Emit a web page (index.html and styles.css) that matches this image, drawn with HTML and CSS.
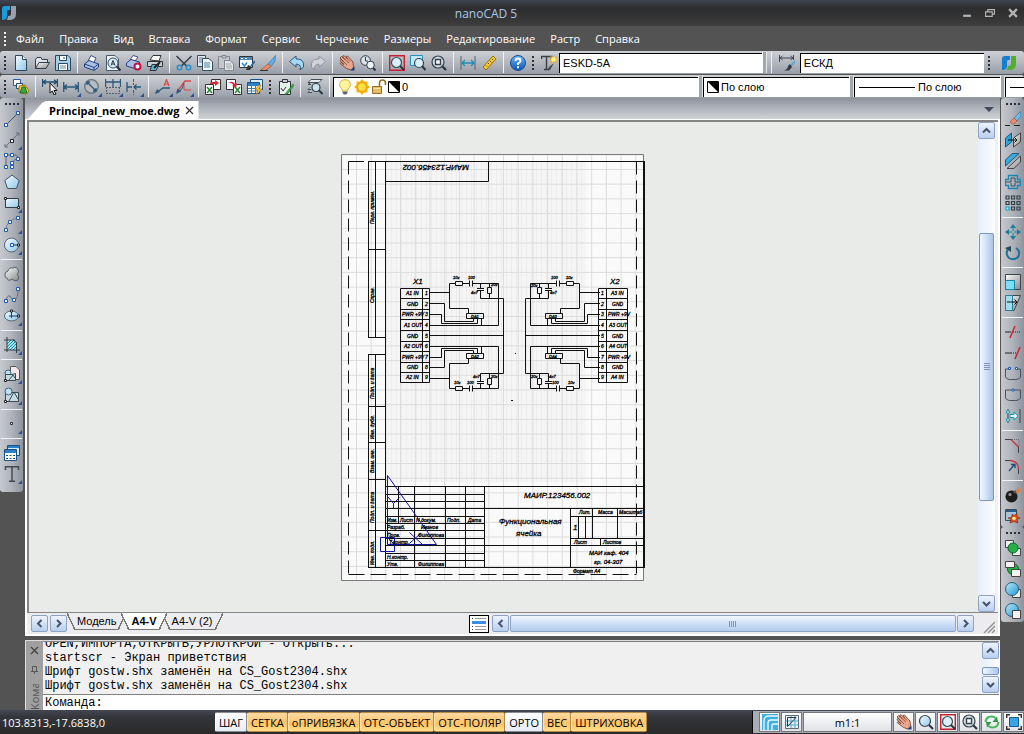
FILE: index.html
```html
<!DOCTYPE html>
<html lang="ru">
<head>
  <meta charset="UTF-8" />
  <meta name="viewport" content="width=device-width, initial-scale=1.0"/>
  <title>nanoCAD 5</title>
  <link rel="stylesheet" href="styles.css">
</head>
<body>

  <!-- icon sprite -->
  <svg class="sprite" aria-hidden="true">
    <defs>
      <linearGradient id="gBlue" x1="0" y1="0" x2="1" y2="1"><stop offset="0" stop-color="#f4fbff"/><stop offset="1" stop-color="#8cc8ea"/></linearGradient>
      <linearGradient id="gDeep" x1="0" y1="0" x2="0" y2="1"><stop offset="0" stop-color="#6db8f5"/><stop offset="1" stop-color="#0a55b0"/></linearGradient>
      <linearGradient id="gGrey" x1="0" y1="0" x2="1" y2="1"><stop offset="0" stop-color="#ffffff"/><stop offset="1" stop-color="#85888c"/></linearGradient>
      <linearGradient id="gSky" x1="0" y1="0" x2="1" y2="1"><stop offset="0" stop-color="#bfe9fb"/><stop offset="1" stop-color="#1e9ad0"/></linearGradient>
    </defs>
    <symbol id="logo" viewBox="0 0 16 16"><path d="M1 4Q1 1 4 1H9V5H7Q6 5 6 7V11Q6 15 1 15Z" fill="#1a9be0"/><path d="M10 1H15V9Q15 15 8 15H5Q7 14 7 11H8Q10 11 10 9Z" fill="#9aa0a8"/></symbol>
    <symbol id="logo2" viewBox="0 0 16 16"><path d="M1 4Q1 1 4 1H9V5H7Q6 5 6 7V11Q6 15 1 15Z" fill="#1580d0"/><path d="M10 1H15V9Q15 15 8 15H5Q7 14 7 11H8Q10 11 10 9Z" fill="#4fae2c"/></symbol>
    <symbol id="new" viewBox="0 0 16 16"><path d="M2.500 .5H9.500L13.500 4.500V15.500H2.500Z" fill="url(#gBlue)" stroke="#2c4658"/><path d="M9.500 .5V4.500H13.500" fill="#fff" stroke="#2c4658"/></symbol>
    <symbol id="open" viewBox="0 0 16 16"><path d="M1.500 13.500V4.500L3 2.500H7L8 4.500H13.500V7" fill="#e0e4e8" stroke="#333c44"/><path d="M1.500 13.500L5 7.500H15.500L12 13.500Z" fill="url(#gGrey)" stroke="#333c44"/></symbol>
    <symbol id="save" viewBox="0 0 16 16"><path d="M.5 .5H13L15.500 3V15.500H.5Z" fill="#a8cfe6" stroke="#26475e"/><path d="M4.500 .5H11.500V5.500H4.500Z" fill="#fff" stroke="#26475e"/><path d="M9 2V4" stroke="#26475e"/><path d="M3.500 8.500H12.500V15.500H3.500Z" fill="#fff" stroke="#26475e"/><path d="M5 11H11M5 13H11" stroke="#6b8698"/></symbol>
    <symbol id="printbase" viewBox="0 0 16 16"><path d="M4 6L7 .5 12 3 9.500 8Z" fill="#fff" stroke="#35508c"/><path d="M.5 9L5 5.500 14.500 9V12L10 15.500 .5 12Z" fill="#a9c0e4" stroke="#26407c"/><path d="M.5 9L10 12.500 14.500 9M10 12.500V15" fill="none" stroke="#26407c"/></symbol>
    <symbol id="printset" viewBox="0 0 16 16"><path d="M4 5L7 .5 12 2 9 6Z" fill="#fff" stroke="#35508c"/><path d="M.5 8L5 4.500 13.500 7V10L9 13.500 .5 11Z" fill="#a9c0e4" stroke="#26407c"/><circle cx="11.500" cy="11.500" r="3" fill="#fff" stroke="#c81048" stroke-width="2"/></symbol>
    <symbol id="preview" viewBox="0 0 16 16"><path d="M1.500 .5H10L13.500 4V15.500H1.500Z" fill="#e8f2f8" stroke="#46586a"/><circle cx="8" cy="8" r="5" fill="#d6edf8" stroke="#3c4c5a"/><path d="M6 10.500L8 5.500 10 10.500M7 9H9" fill="none" stroke="#243440"/><path d="M11.500 11.500L15.500 15.500" stroke="#28343e" stroke-width="2"/></symbol>
    <symbol id="printer" viewBox="0 0 16 16"><path d="M3 5L6 .5H14L12 6Z" fill="#fff" stroke="#333"/><path d="M.5 6.500H15.500V11.500H.5Z" fill="#c3ced6" stroke="#333"/><path d="M3 15.500L5 9.500H12L9 15.500Z" fill="#58b8dc" stroke="#333"/><path d="M7 13L13 7" stroke="#222" stroke-width="2"/></symbol>
    <symbol id="cut" viewBox="0 0 16 16"><path d="M.5 1L11 11.500M15.500 1L5 11.500" stroke="#333e46" stroke-width="1.500"/><circle cx="3.500" cy="12.500" r="2.300" fill="none" stroke="#2a8fc8" stroke-width="1.500"/><circle cx="12.500" cy="12.500" r="2.300" fill="none" stroke="#2a8fc8" stroke-width="1.500"/></symbol>
    <symbol id="copy" viewBox="0 0 16 16"><path d="M.5 .5H8.500V11.500H.5Z" fill="#dceaf3" stroke="#334a5c"/><path d="M2 3H6M2 5H6M2 7H6" stroke="#6b8090"/><path d="M5.500 3.500H12L15.500 7V15.500H5.500Z" fill="#f3fafe" stroke="#334a5c"/><path d="M7 8H13M7 10H13M7 12H13" stroke="#4b7a9c"/></symbol>
    <symbol id="paste" viewBox="0 0 16 16"><g stroke="#80868c" fill="#c4c8cc"><path d="M.5 1.500H11.500V13.500H.5Z"/><path d="M4 .5H8V3H4Z"/><path d="M6.500 5.500H12L15.500 9V15.500H6.500Z" fill="#e4e6e8"/></g><path d="M8 9H13M8 11H14M8 13H14" stroke="#a2a6aa"/></symbol>
    <symbol id="match" viewBox="0 0 16 16"><path d="M.5 1.500H13.500V12.500H.5Z" fill="#f7fafc" stroke="#333"/><path d="M1 2H13V5H1Z" fill="#4b87ae"/><path d="M2 3.500H4M6 3.500H8" stroke="#fff"/><path d="M3 8L5.500 11 8 7.500" fill="none" stroke="#2a8fc8" stroke-width="1.500"/><path d="M16 6L12 11" stroke="#2a6c9c" stroke-width="2"/><path d="M7 15L9 10 13 12 11 15Z" fill="#333"/></symbol>
    <symbol id="brush" viewBox="0 0 16 16"><path d="M15.500 .5L8 9 11 11.500 15 6Z" fill="#5fb2e4" stroke="#2b6c9c" stroke-width=".6"/><path d="M8 9L11 11.500 5 15.500 1 15Z" fill="#f09068" stroke="#94492a" stroke-width=".6"/><path d="M0 15.500H8" stroke="#333"/></symbol>
    <symbol id="undo" viewBox="0 0 16 16"><path d="M.5 6.500L7 1V4H9Q15.500 4.500 14.500 12L11 15Q13 9.500 7 9V12Z" fill="#a5d8f4" stroke="#275a80"/></symbol>
    <symbol id="redo" viewBox="0 0 16 16"><path d="M15.500 6.500L9 1V4H7Q.5 4.500 1.500 12L5 15Q3 9.500 9 9V12Z" fill="#d0d3d7" stroke="#8f959b"/></symbol>
    <symbol id="hand" viewBox="0 0 16 16"><path d="M1 3L2.500 1.500 6 4.500 3.500 1.500 5 .5 8.500 4 7 1.500 8.500 1 14 7 14.500 12 12 15 7.500 13.500 1 8.500 2 7.500 5 9.500 .8 5.500 2 4.500 5 7Z" fill="#e8a78c" stroke="#70392a" stroke-width=".8"/><path d="M6 4.500L10 8M5 7L8 10M8.500 4L11 6.500" stroke="#70392a" stroke-width=".7"/><path d="M11.500 15.500L15.500 11.500V15.500Z" fill="#1a3c8c"/></symbol>
    <symbol id="zoomdyn" viewBox="0 0 16 16"><circle cx="5.500" cy="5.500" r="4.800" fill="#d9e3ea" stroke="#333e46"/><path d="M5.500 2V6H8" fill="none" stroke="#333e46"/><circle cx="10.500" cy="10" r="3.800" fill="#eef5fa" stroke="#333e46"/><path d="M13 13L15.500 15.500" stroke="#28343e" stroke-width="2"/></symbol>
    <symbol id="zoomall" viewBox="0 0 16 16"><path d="M.7 .7H15.300V15.300H.7Z" fill="none" stroke="#c81e32" stroke-width="1.400"/><circle cx="7.500" cy="7.500" r="5" fill="#d9f0fa" stroke="#30505c" stroke-width="1.200"/><path d="M11 11L15 15" stroke="#28343e" stroke-width="2"/></symbol>
    <symbol id="zoomwin" viewBox="0 0 16 16"><path d="M.5 .5H12.500V10.500H.5Z" fill="#c4e6f4" stroke="#2b90b8"/><circle cx="9" cy="8" r="4.500" fill="#d9f0fa" stroke="#30404c" stroke-width="1.200"/><path d="M12 11L15.500 15" stroke="#28343e" stroke-width="2"/></symbol>
    <symbol id="zoomobj" viewBox="0 0 16 16"><circle cx="7" cy="7" r="6" fill="#d2dde4" stroke="#35424c" stroke-width="1.200"/><path d="M4.500 4.500H9.500V9.500H4.500Z" fill="#fff" stroke="#35424c" stroke-width="1.400"/><path d="M11.500 11.500L15 15" stroke="#28343e" stroke-width="2.200"/></symbol>
    <symbol id="zoom" viewBox="0 0 16 16"><circle cx="7" cy="7" r="5.500" fill="url(#gBlue)" stroke="#35424c" stroke-width="1.200"/><path d="M11 11L15 15" stroke="#28343e" stroke-width="2.200"/></symbol>
    <symbol id="measure" viewBox="0 0 16 16"><path d="M1 1V15M15 1V15" stroke="#556069"/><path d="M2 8H14M5 5L2 8 5 11M11 5L14 8 11 11" fill="none" stroke="#1c8fb4" stroke-width="1.300"/></symbol>
    <symbol id="ruler" viewBox="0 0 16 16"><path d="M12 1L15 4 5 15 2 12Z" fill="#f4cc30" stroke="#94700c"/><path d="M11 4L12 5M9 6L10.500 7.500M7 8L8 9M5 10.500L6 11.500" stroke="#6c5208"/></symbol>
    <symbol id="help" viewBox="0 0 16 16"><circle cx="8" cy="8" r="7.500" fill="url(#gDeep)" stroke="#1a4f90"/><path d="M5.500 6Q5.500 3.500 8 3.500 10.500 3.500 10.500 6 10.500 7.300 8 8.300V10" fill="none" stroke="#fff" stroke-width="1.800"/><path d="M7 11.300H9V13.200H7Z" fill="#fff"/></symbol>
    <symbol id="textstyle" viewBox="0 0 16 16"><path d="M.5 4V1.500H10.500V4M5.500 1.500V14.500M3 14.500H8" fill="none" stroke="#3a4248" stroke-width="1.500"/><path d="M13 8L9 15 7 15.500 8 12Z" fill="#444"/><path d="M12.500 0V9M8 4.500H16M9.500 1.500L15.500 7.500M15.500 1.500L9.500 7.500" stroke="#f4ac18" stroke-width="1.300"/><circle cx="12.500" cy="4.500" r="2.300" fill="#fff58c"/></symbol>
    <symbol id="dimstyle" viewBox="0 0 16 16"><path d="M.5 0V7M14.500 0V5M1 3H14M3.500 1L1 3 3.500 5M11.500 1L14 3 11.500 5" fill="none" stroke="#3a4854"/><path d="M16 5L11 10 12 12 16 8Z" fill="#58a8dc"/><path d="M11 9L13 12 10 15.500 5 15.500Q9 14 9 11Z" fill="#33393e"/></symbol>
    <symbol id="layers" viewBox="0 0 16 16"><path d="M.5 .5H7.500V6.500H.5Z" fill="#fff" stroke="#2858a0"/><path d="M3.500 4.500H9.500V9.500H3.500Z" fill="#fff" stroke="#284870"/><path d="M6 7L12 6 16 12 13 15.500 6 13Z" fill="#ffd23c" stroke="#a07808"/><path d="M7 14L9 8 12 8 14 14Z" fill="#38a848" stroke="#1c6c2c"/></symbol>
    <symbol id="dimcur" viewBox="0 0 16 16"><path d="M.5 0V8M15.500 0V8M1 3H15M4 .8L1 3 4 5.200M12 .8L15 3 12 5.200" fill="none" stroke="#1c5070" stroke-width="1.300"/><path d="M8 4V14L10.500 12 12 16 14 15 12 11.500H15Z" fill="#fff" stroke="#111"/></symbol>
    <symbol id="dimlin" viewBox="0 0 16 16"><path d="M.7 3V13M15.300 3V13M1 8H15M4 5.500L1 8 4 10.500M12 5.500L15 8 12 10.500" fill="none" stroke="#28587c" stroke-width="1.300"/></symbol>
    <symbol id="dimdia" viewBox="0 0 16 16"><circle cx="7.500" cy="7.500" r="6.800" fill="#b6bcc3" stroke="#6a747e" stroke-width="1.300"/><path d="M3 3L12 12M3 6V3H6M12 9V12H9" fill="none" stroke="#28587c" stroke-width="1.300"/></symbol>
    <symbol id="dimchain" viewBox="0 0 16 16"><path d="M.5 0V8M8 0V8M15.500 0V8M1 3H15" stroke="#28587c" stroke-width="1.300"/><path d="M1 8.500H15M1 14.500H15M1.500 8V15M14.500 8V15" stroke="#555f68" stroke-dasharray="2 1"/></symbol>
    <symbol id="dimaxis" viewBox="0 0 16 16"><path d="M1 3V13M1 8H6M15 8H8M10.500 5.500L8 8 10.500 10.500" fill="none" stroke="#28587c" stroke-width="1.300"/><path d="M7.500 0V6M7.500 11V16" stroke="#d02828" stroke-dasharray="3 1"/></symbol>
    <symbol id="leadera" viewBox="0 0 16 16"><path d="M1 14L8 9H15" fill="none" stroke="#28587c" stroke-width="1.300"/><path d="M0 15L2 10 5 13Z" fill="#28587c"/><path d="M9 7L11.500 .5 14 7M10 5H13" fill="none" stroke="#d84848" stroke-width="1.200"/></symbol>
    <symbol id="leaderb" viewBox="0 0 16 16"><path d="M1 13L9 2H15" fill="none" stroke="#d84848" stroke-width="1.300"/><path d="M3 13Q7 10 8 4" fill="none" stroke="#28587c"/><path d="M0 15L1.500 9.500 5 12.500Z" fill="#28587c"/><path d="M8 5V11H15" fill="none" stroke="#d84848"/></symbol>
    <symbol id="xlsout" viewBox="0 0 16 16"><path d="M6.500 .5H15.500V10.500H6.500Z" fill="#fff" stroke="#333"/><path d="M.5 5.500H8.500V15.500H.5Z" fill="#fff" stroke="#333"/><path d="M2 8L7 14M7 8L2 14" stroke="#288838" stroke-width="1.600"/><path d="M5 5Q5 2 10 3V1L14 4 10 7V5" fill="#d82838"/></symbol>
    <symbol id="xlsin" viewBox="0 0 16 16"><path d="M.5 .5H9.500V10.500H.5Z" fill="#fff" stroke="#333"/><path d="M7.500 5.500H15.500V15.500H7.500Z" fill="#fff" stroke="#333"/><path d="M9 8L14 14M14 8L9 14" stroke="#288838" stroke-width="1.600"/><path d="M2 4Q6 1 9 5L11 4 10 9 6 7 7.500 6Q5 3 2 4" fill="#d82838"/></symbol>
    <symbol id="tables" viewBox="0 0 16 16"><path d="M3.500 .5H15.500V10.500H3.500Z" fill="#d8ecf8" stroke="#1c5080"/><path d="M.5 3.500H12.500V14.500H.5Z" fill="#fff" stroke="#1c5080"/><path d="M1 4H12V7H1Z" fill="#2c80c4"/><path d="M1 9.500H12M1 12H12M4.500 7V14M8.500 7V14" stroke="#487ca4"/><path d="M12 6L8 11H11L9 15.500 15 10H12L14 6Z" fill="#ffc820" stroke="#a86c08" stroke-width=".6"/></symbol>
    <symbol id="tables2" viewBox="0 0 16 16"><path d="M3.500 .5H15.500V10.500H3.500Z" fill="#d8ecf8" stroke="#1c5080"/><path d="M4 1H15V3H4Z" fill="#2c80c4"/><path d="M.5 4.500H12.500V15.500H.5Z" fill="#fff" stroke="#1c5080"/><path d="M1 5H12V8H1Z" fill="#2c80c4"/><path d="M2 10H4V11H2ZM5.500 10H7.500V11H5.500ZM9 10H11V11H9ZM2 13H4V14H2ZM5.500 13H7.500V14H5.500ZM9 13H11V14H9Z" fill="#1c5080"/></symbol>
    <symbol id="check" viewBox="0 0 16 16"><path d="M1.500 2.500H12.500V15.500H1.500Z" fill="#e3f2ea" stroke="#333"/><path d="M4.500 .5H9.500V3.500H4.500Z" fill="#ccd" stroke="#333"/><path d="M3 9L5 12 8 8" fill="none" stroke="#333"/><path d="M15 5L8 14 7 15.500 10 14.500 15.500 7Z" fill="#40b050" stroke="#1c6428" stroke-width=".6"/></symbol>
    <symbol id="layerfind" viewBox="0 0 16 16"><path d="M4 .5H15L12 3.500H1ZM4 5.500H1L4 3.500M4 10.500H1L3 8.500M5 13.500H1L3 11.500" fill="#e4e8ec" stroke="#444e58"/><circle cx="9" cy="8.500" r="4" fill="#cbe4f0" stroke="#333e48" stroke-width="1.200"/><path d="M12 11.500L15.500 15" stroke="#28343e" stroke-width="2"/></symbol>
    <symbol id="bulb" viewBox="0 0 16 16"><path d="M5 10Q2.500 8 2.500 5.500 3 .7 8 .7 13 .7 13.500 5.500 13.500 8 11 10L10.500 12H5.500Z" fill="#fff3a0" stroke="#d8b038"/><path d="M5.500 12.500H10.500V14L9 15.500H7L5.500 14Z" fill="#5a6670"/></symbol>
    <symbol id="sun" viewBox="0 0 16 16"><path d="M8 0L10 2.500 13.500 2.500 13.500 6 16 8 13.500 10 13.500 13.500 10 13.500 8 16 6 13.500 2.500 13.500 2.500 10 0 8 2.500 6 2.500 2.500 6 2.500Z" fill="#f6b010"/><circle cx="8" cy="8" r="4.500" fill="#ffdf40" stroke="#e89a08"/></symbol>
    <symbol id="lock" viewBox="0 0 16 16"><path d="M8.500 8V4Q8.500 1 11.500 1 14.500 1 14.500 4V6" fill="none" stroke="#90702c" stroke-width="1.600"/><path d="M1.500 7.500H10.500V14.500H1.500Z" fill="#e8bc60" stroke="#90702c"/><path d="M3 9.500H9" stroke="#fbe4a8"/></symbol>
    <symbol id="swatch" viewBox="0 0 12 12"><path d="M.5 .5H11.500V11.500H.5Z" fill="#fff" stroke="#000"/><path d="M1 1H11V11Z"/></symbol>

    <symbol id="line" viewBox="0 0 16 16"><path d="M2 14L14 2" stroke="#456"/><g fill="#fff" stroke="#1c58b8"><path d="M.5 12.500H3.500V15.500H.5Z"/><path d="M12.500 .5H15.500V3.500H12.500Z"/></g></symbol>
    <symbol id="xline" viewBox="0 0 16 16"><path d="M1 15L15 1M1 12V15H4M12 1H15V4" fill="none" stroke="#667078"/><path d="M6.500 7.500H9.500V10.500H6.500Z" fill="#fff" stroke="#222"/></symbol>
    <symbol id="pline" viewBox="0 0 16 16"><path d="M2 14V2H8Q14 1 14 6 8 6 8 14" fill="none" stroke="#555f68"/><g fill="#fff" stroke="#1c58b8"><path d="M.5 .5H3.500V3.500H.5Z"/><path d="M6.500 .5H9.500V3.500H6.500Z"/><path d="M12.500 4.500H15.500V7.500H12.500Z"/><path d="M6.500 8.500H9.500V11.500H6.500Z"/><path d="M.5 12.500H3.500V15.500H.5Z"/><path d="M6.500 12.500H9.500V15.500H6.500Z"/></g></symbol>
    <symbol id="polygon" viewBox="0 0 16 16"><path d="M8 1L15.200 6.500 12.500 14.500H3.500L.8 6.500Z" fill="url(#gBlue)" stroke="#45545f"/></symbol>
    <symbol id="rect" viewBox="0 0 16 16"><path d="M1.500 3.500H14.500V12.500H1.500Z" fill="url(#gBlue)" stroke="#333e48"/><path d="M.5 2.500H2.500V4.500H.5ZM13.500 11.500H15.500V13.500H13.500Z" fill="#fff" stroke="#222"/></symbol>
    <symbol id="arc" viewBox="0 0 16 16"><path d="M2 14Q2 4 14 2" fill="none" stroke="#778088"/><g fill="#fff" stroke="#1c58b8"><path d="M.5 12.500H3.500V15.500H.5Z"/><path d="M4.500 4.500H7.500V7.500H4.500Z"/><path d="M12.500 .5H15.500V3.500H12.500Z"/></g></symbol>
    <symbol id="circle" viewBox="0 0 16 16"><circle cx="7.500" cy="8" r="7" fill="url(#gBlue)" stroke="#556470"/><path d="M8 8H14" stroke="#333"/><path d="M6.500 6.500H9.500V9.500H6.500Z" fill="#fff" stroke="#1c58b8"/><path d="M13.500 7H15.500V9H13.500Z" fill="#fff" stroke="#222"/></symbol>
    <symbol id="cloud" viewBox="0 0 16 16"><path d="M4 5Q5 1 9 2 13 0 14 4 16 6 13 8 16 11 14 14 11 16 8 13 4 16 3 12 0 11 1 8 1 6 4 5Z" fill="url(#gGrey)" stroke="#555f68"/></symbol>
    <symbol id="spline" viewBox="0 0 16 16"><path d="M2 14Q3 8 6 9 8 14 11 13 14 11 14 3" fill="none" stroke="#667078"/><g fill="#fff" stroke="#1c58b8"><path d="M.5 12.500H3.500V15.500H.5Z"/><path d="M8.500 11.500H11.500V14.500H8.500Z"/><path d="M12.500 .5H15.500V3.500H12.500Z"/></g></symbol>
    <symbol id="ellipse" viewBox="0 0 16 16"><ellipse cx="7.500" cy="8" rx="7" ry="5" fill="url(#gBlue)" stroke="#556470"/><path d="M7.500 3V10M5 8H14" stroke="#1c3868"/><path d="M6.500 2H8.500V4H6.500ZM13.500 7H15.500V9H13.500Z" fill="#fff" stroke="#222"/></symbol>
    <symbol id="hatch" viewBox="0 0 16 16"><path d="M3 3H10L13 6V13H3Z" fill="#a8e4ee"/><path d="M3 7L7 3M3 10L10 3M3 13L12 4M6 13L13 6M9 13L13 9" stroke="#1494ac"/><path d="M3 0V15M12.500 5V16M0 3H11M0 13H16M9 3L13 6" fill="none" stroke="#333e48"/></symbol>
    <symbol id="insblock" viewBox="0 0 16 16"><path d="M6.500 .5H12L15.500 4V13.500H6.500Z" fill="#f7e8e8" stroke="#555"/><circle cx="4" cy="7" r="3" fill="#bfe0ee" stroke="#3b6478"/><path d="M1.500 8.500H8L11.500 7.500V14.500H1.500Z" fill="#c6dbe3" stroke="#3c4850"/><path d="M5 14L9 9 11 12" fill="none" stroke="#3c4850"/><path d="M.5 13.500H2.500V15.500H.5Z" fill="#fff" stroke="#222"/></symbol>
    <symbol id="mkblock" viewBox="0 0 16 16"><path d="M1.500 5.500H14.500V14.500H1.500Z" fill="#c6dbe3" stroke="#3c4850"/><circle cx="4.500" cy="4.500" r="3.500" fill="#bfe0ee" stroke="#3b6478"/><path d="M5 14L10 5 14 12" fill="none" stroke="#3c4850"/><path d="M.5 13.500H2.500V15.500H.5Z" fill="#fff" stroke="#222"/></symbol>
    <symbol id="point" viewBox="0 0 16 16"><path d="M6.500 6.500H8.500V8.500H6.500Z" fill="#fff" stroke="#333"/></symbol>
    <symbol id="text" viewBox="0 0 16 16"><path d="M1.500 4V.7H14.500V4M8 1V15.300M5 15.300H11" fill="none" stroke="#454b50" stroke-width="1.500"/></symbol>

    <symbol id="erase" viewBox="0 0 16 16"><path d="M15.500 .5L9 7 12 10 16 5Z" fill="#6fbbe8" stroke="#2f6c98" stroke-width=".6"/><path d="M9 7L12 10 8 13.500 5 11Z" fill="#ee8a70" stroke="#9a4430" stroke-width=".6"/><path d="M0 14.500H5M9 14.500H15" stroke="#222"/></symbol>
    <symbol id="mirror" viewBox="0 0 16 16"><path d="M.5 6L6.500 1V10L.5 15Z" fill="#2ba3d4" stroke="#1c5c7c"/><path d="M8.500 6L15.500 1V10L8.500 15Z" fill="url(#gGrey)" stroke="#444"/><path d="M3 8H12M9.500 5.500L12 8 9.500 10.500" fill="none" stroke="#111"/></symbol>
    <symbol id="offset" viewBox="0 0 16 16"><path d="M.5 7L7 .5H14L.5 13Z" fill="#38aadc" stroke="#1c5c7c"/><path d="M2 15.500L15.500 3V9L9 15.500Z" fill="url(#gGrey)" stroke="#444"/></symbol>
    <symbol id="contour" viewBox="0 0 16 16"><path d="M.5 5.500H3.500V1.500H12.500V5.500H15.500V11.500H12.500V14.500H3.500V11.500H.5Z" fill="none" stroke="#1c88b8" stroke-width="1.400"/><path d="M1 8H6V4H10V8H15M6 9V12H10V9" fill="none" stroke="#35505f"/></symbol>
    <symbol id="array" viewBox="0 0 16 16"><path d="M1 1H4V4H1ZM6.500 1H9.500V4H6.500ZM12 1H15V4H12ZM1 6.500H4V9.500H1ZM6.500 6.500H9.500V9.500H6.500ZM12 6.500H15V9.500H12ZM6.500 12H9.500V15H6.500ZM12 12H15V15H12Z" fill="none" stroke="#33404a" stroke-width="1.200"/><path d="M1 12H4V15H1Z" fill="#bfeeff" stroke="#18a0d0" stroke-width="1.200"/></symbol>
    <symbol id="move" viewBox="0 0 16 16"><path d="M8 0L11 4H5ZM8 16L11 12H5ZM0 8L4 5V11ZM16 8L12 5V11Z" fill="#1e7c9c"/><path d="M8 4V7M8 9V12M4 8H7M9 8H12" stroke="#1e7c9c"/></symbol>
    <symbol id="rotate" viewBox="0 0 16 16"><path d="M3 4Q0 9 4 13 9 16 13 12 16 6 11 3" fill="none" stroke="#1f7394" stroke-width="2"/><path d="M0 3L6 1 6 7Z" fill="#2b4856"/></symbol>
    <symbol id="scale" viewBox="0 0 16 16"><path d="M.5 .5H15.500V15.500H.5Z" fill="url(#gGrey)" stroke="#444"/><path d="M.5 6.500H9.500V15.500H.5Z" fill="#7fe0f4" stroke="#1484a4"/></symbol>
    <symbol id="stretch" viewBox="0 0 16 16"><path d="M1.500 .5H15.500L9 15.500H1.500Z" fill="url(#gGrey)" stroke="#444"/><path d="M.5 .5H7.500V15.500H.5Z" fill="#9fdcec" stroke="#2c7c94"/><path d="M2 7H12M9.500 4.500L12 7 9.500 9.500" fill="none" stroke="#111"/></symbol>
    <symbol id="trim" viewBox="0 0 16 16"><path d="M0 8H6" stroke="#222"/><path d="M8 8H16" stroke="#222" stroke-dasharray="1 1"/><path d="M5 14L10 2" stroke="#d02030" stroke-width="1.500"/></symbol>
    <symbol id="extend" viewBox="0 0 16 16"><path d="M0 8H6" stroke="#222"/><path d="M6 8H12" stroke="#222" stroke-dasharray="1 1"/><path d="M10 14L15 2" stroke="#d02030" stroke-width="1.500"/></symbol>
    <symbol id="break2" viewBox="0 0 16 16"><path d="M4 3H.5V11Q2 14 8 13.500 14 14 15.500 11V3H12" fill="none" stroke="#46525c"/><path d="M3.500 1.500H5.500V3.500H3.500ZM10.500 1.500H12.500V3.500H10.500Z" fill="#fff" stroke="#1c58b8"/></symbol>
    <symbol id="break1" viewBox="0 0 16 16"><path d="M.5 3H15.500V11Q14 14 8 13.500 2 14 .5 11Z" fill="none" stroke="#46525c"/><path d="M7 2H9V4H7Z" fill="#fff" stroke="#1c58b8"/></symbol>
    <symbol id="align" viewBox="0 0 16 16"><path d="M3 1V15M15 1V15" stroke="#444"/><path d="M1.500 3H4.500V5H1.500ZM1.500 11H4.500V13H1.500Z" fill="#fff" stroke="#18a0b8"/><path d="M5 6.500H9V4L13 8 9 12V9.500H5Z" fill="#e6faff" stroke="#1898b8"/></symbol>
    <symbol id="chamfer" viewBox="0 0 16 16"><path d="M0 2.500H7M13.500 9V16" stroke="#444"/><path d="M7 2.500H14V9" fill="none" stroke="#667" stroke-dasharray="1 1"/><path d="M6 2.500L13.500 10" stroke="#c83848" stroke-width="1.300"/></symbol>
    <symbol id="fillet" viewBox="0 0 16 16"><path d="M0 2.500H5M13.500 11V16" stroke="#444"/><path d="M5 2.500Q13.500 3 13.500 11" fill="none" stroke="#c83848" stroke-width="1.300"/><path d="M4 13L10 6M6 6.500H10V10" fill="none" stroke="#1c4c78" stroke-width="1.300"/></symbol>
    <symbol id="bomb" viewBox="0 0 16 16"><circle cx="6.500" cy="9.500" r="6" fill="#1c1c1c"/><circle cx="5" cy="7.500" r="1.600" fill="#999"/><path d="M9 4L11 6" stroke="#555" stroke-width="3"/><path d="M13 0L14 2.500 16 3 14 4.500 14.500 7 12.500 5.500 10.500 5 12 3.500Z" fill="#f47828"/></symbol>
    <symbol id="explode" viewBox="0 0 16 16"><path d="M.5 1.500H11.500V12.500H.5Z" fill="#a9c4d8" stroke="#2c4c68"/><path d="M1 2H11V4H1Z" fill="#2c5c88"/><path d="M7 6L9 7.500 12 5.500 12 8.500 15 10 12 11.500 13 15 9 13.500 5 15 6 11.500 3 10 7 9Z" fill="#d8501c" stroke="#802008" stroke-width=".6"/><circle cx="9" cy="10.500" r="1.800" fill="#ffe890"/><path d="M12 3L15 1M14 4H16" stroke="#e4a040"/></symbol>
    <symbol id="order1" viewBox="0 0 16 16"><path d="M.5 .5H8.500V7.500H.5ZM7.500 8.500H15.500V15.500H7.500Z" fill="#eee" stroke="#444"/><circle cx="8" cy="8" r="5" fill="#28b048" stroke="#146428"/></symbol>
    <symbol id="order2" viewBox="0 0 16 16"><circle cx="8" cy="8" r="5.500" fill="#28b048" stroke="#146428"/><path d="M.5 .5H9.500V6.500H.5ZM6.500 8.500H15.500V15.500H6.500Z" fill="#f4f4f4" stroke="#444"/></symbol>
    <symbol id="order3" viewBox="0 0 16 16"><path d="M7.500 7.500H15.500V15.500H7.500Z" fill="#eee" stroke="#444"/><circle cx="7" cy="7" r="6.500" fill="url(#gSky)" stroke="#245c80"/></symbol>
    <symbol id="order4" viewBox="0 0 16 16"><circle cx="7" cy="7" r="6.500" fill="url(#gSky)" stroke="#245c80"/><path d="M7.500 7.500H15.500V15.500H7.500Z" fill="#f4f0f0" stroke="#444"/></symbol>

    <symbol id="paper" viewBox="0 0 16 16"><path d="M0 0H16V16H0Z" fill="#3fb0e4"/><path d="M2 16V7Q2 2 7 2H16M6 16V9Q6 6 9 6H16M10 16V11Q10 10 11 10H16" fill="none" stroke="#e8f8ff" stroke-width="1.400"/></symbol>
    <symbol id="gridico" viewBox="0 0 16 16"><path d="M1.500 1.500H14.500V14.500H1.500Z" fill="#e4f2fa" stroke="#5c6c78"/><path d="M7 2V14M11 2V14M2 7H14M2 11H14" fill="none" stroke="#58a8d0"/><path d="M3.500 3.500H12L3.500 12.500Z" fill="none" stroke="#334"/></symbol>
    <symbol id="refresh" viewBox="0 0 16 16"><path d="M1.500 8Q2 2.500 7.500 2.500 10 2.500 11.500 4" fill="none" stroke="#46b858" stroke-width="2"/><path d="M14 8H8.500L13 2.500Z" fill="#2f9840"/><path d="M14.500 8Q14 13.500 8.500 13.500 6 13.500 4.500 12" fill="none" stroke="#46b858" stroke-width="2"/><path d="M2 8H7.500L3 13.500Z" fill="#2f9840"/></symbol>
    <symbol id="full" viewBox="0 0 16 16"><path d="M3.500 3.500H12.500V12.500H3.500Z" fill="#38a4e8" stroke="#165c90"/><path d="M.7 4V.7H4M12 .7H15.300V4M15.300 12V15.300H12M4 15.300H.7V12" fill="none" stroke="#333" stroke-width="1.400"/></symbol>
    <symbol id="views" viewBox="0 0 18 16"><path d="M1 1H17V15H1Z" fill="#fff"/><path d="M5 2.500H16M5 10.500H16M5 13.500H16" stroke="#9a9a9a"/><path d="M2 5H16V8H2Z" fill="#3c8ce0"/><path d="M2 2.500H3M2 10.500H3M2 13.500H3" stroke="#333"/></symbol>
    <symbol id="up" viewBox="0 0 9 9"><path d="M1 6.500L4.500 3 8 6.500" fill="none" stroke="#44546c" stroke-width="2"/></symbol>
    <symbol id="down" viewBox="0 0 9 9"><path d="M1 3L4.500 6.500 8 3" fill="none" stroke="#44546c" stroke-width="2"/></symbol>
    <symbol id="left" viewBox="0 0 9 9"><path d="M6.500 1L3 4.500 6.500 8" fill="none" stroke="#44546c" stroke-width="2"/></symbol>
    <symbol id="right" viewBox="0 0 9 9"><path d="M3 1L6.500 4.500 3 8" fill="none" stroke="#44546c" stroke-width="2"/></symbol>
  </svg>

  <header class="titlebar">
    <svg class="app-logo" aria-hidden="true"><use href="#logo"/></svg>
    <h1 class="app-title">nanoCAD 5</h1>
    <div class="win-buttons">
      <button aria-label="Свернуть"><svg viewBox="0 0 9 9"><path d="M1 7H8" stroke="#b4b4b4" stroke-width="2"/></svg></button>
      <button aria-label="Развернуть"><svg viewBox="0 0 9 9"><path d="M2.500 3V1.500H8.500V5.500H7M.5 3.500H6.500V7.500H.5Z" fill="none" stroke="#b4b4b4"/></svg></button>
      <button aria-label="Закрыть"><svg viewBox="0 0 9 9"><path d="M1 1L8 8M8 1L1 8" stroke="#b4b4b4" stroke-width="2"/></svg></button>
    </div>
  </header>

  <nav class="menubar">
    <span class="grip grip-light"></span>
    <a href="#">Файл</a>
    <a href="#">Правка</a>
    <a href="#">Вид</a>
    <a href="#">Вставка</a>
    <a href="#">Формат</a>
    <a href="#">Сервис</a>
    <a href="#">Черчение</a>
    <a href="#">Размеры</a>
    <a href="#">Редактирование</a>
    <a href="#">Растр</a>
    <a href="#">Справка</a>
  </nav>

  <div class="toolbar">
    <span class="grip"></span>
    <button class="tool" aria-label="Новый"><svg><use href="#new"/></svg></button>
    <button class="tool" aria-label="Открыть"><svg><use href="#open"/></svg></button>
    <button class="tool" aria-label="Сохранить"><svg><use href="#save"/></svg></button>
    <span class="sep"></span>
    <button class="tool" aria-label="Печать"><svg><use href="#printbase"/></svg></button>
    <button class="tool" aria-label="Предварительный просмотр"><svg><use href="#preview"/></svg></button>
    <button class="tool" aria-label="Параметры печати"><svg><use href="#printset"/></svg></button>
    <button class="tool" aria-label="Плоттеры"><svg><use href="#printer"/></svg></button>
    <span class="sep"></span>
    <button class="tool" aria-label="Вырезать"><svg><use href="#cut"/></svg></button>
    <button class="tool" aria-label="Копировать"><svg><use href="#copy"/></svg></button>
    <button class="tool" aria-label="Вставить"><svg><use href="#paste"/></svg></button>
    <button class="tool" aria-label="Выбор свойств"><svg><use href="#match"/></svg></button>
    <button class="tool" aria-label="Копирование свойств"><svg><use href="#brush"/></svg></button>
    <span class="sep"></span>
    <button class="tool" aria-label="Отменить"><svg><use href="#undo"/></svg></button>
    <button class="tool" aria-label="Вернуть"><svg><use href="#redo"/></svg></button>
    <span class="sep"></span>
    <button class="tool" aria-label="Панорамирование"><svg><use href="#hand"/></svg></button>
    <button class="tool" aria-label="Зумирование"><svg><use href="#zoomdyn"/></svg></button>
    <span class="sep"></span>
    <button class="tool" aria-label="Показать все"><svg><use href="#zoomall"/></svg></button>
    <button class="tool" aria-label="Показать рамкой"><svg><use href="#zoomwin"/></svg></button>
    <button class="tool" aria-label="Показать объект"><svg><use href="#zoomobj"/></svg></button>
    <span class="sep"></span>
    <button class="tool" aria-label="Расстояние"><svg><use href="#measure"/></svg></button>
    <button class="tool" aria-label="Измерение"><svg><use href="#ruler"/></svg></button>
    <span class="sep"></span>
    <button class="tool" aria-label="Помощь"><svg><use href="#help"/></svg></button>
    <span class="grip"></span>
    <button class="tool" aria-label="Текстовые стили"><svg><use href="#textstyle"/></svg></button>
    <div class="combo combo-textstyle"><select aria-label="Текстовый стиль"><option>ESKD-5A</option></select></div>
    <span class="edge"></span>
    <span class="sep"></span>
    <button class="tool tool-wide" aria-label="Размерные стили"><svg><use href="#dimstyle"/></svg></button>
    <div class="combo combo-dimstyle"><select aria-label="Размерный стиль"><option>ЕСКД</option></select></div>
    <span class="grip"></span>
    <button class="tool tool-last" aria-label="nanoCAD"><svg><use href="#logo2"/></svg></button>
  </div>

  <div class="toolbar">
    <span class="grip"></span>
    <button class="tool" aria-label="Слои"><svg><use href="#layers"/></svg></button>
    <span class="sep"></span>
    <button class="tool" aria-label="Размер"><svg><use href="#dimcur"/></svg></button>
    <button class="tool more" aria-label="Линейный размер"><svg><use href="#dimlin"/></svg></button>
    <button class="tool more" aria-label="Диаметр"><svg><use href="#dimdia"/></svg></button>
    <button class="tool more" aria-label="Размерная цепь"><svg><use href="#dimchain"/></svg></button>
    <button class="tool more" aria-label="Размер от оси"><svg><use href="#dimaxis"/></svg></button>
    <span class="sep"></span>
    <button class="tool more" aria-label="Выноска"><svg><use href="#leadera"/></svg></button>
    <button class="tool more" aria-label="Мультивыноска"><svg><use href="#leaderb"/></svg></button>
    <span class="sep"></span>
    <button class="tool" aria-label="Экспорт таблицы"><svg><use href="#xlsout"/></svg></button>
    <button class="tool" aria-label="Импорт таблицы"><svg><use href="#xlsin"/></svg></button>
    <button class="tool" aria-label="Таблицы"><svg><use href="#tables"/></svg></button>
    <span class="grip"></span>
    <button class="tool" aria-label="Проверка"><svg><use href="#check"/></svg></button>
    <span class="sep"></span>
    <button class="tool" aria-label="Поиск слоя"><svg><use href="#layerfind"/></svg></button>
    <span class="sep"></span>
    <div class="combo combo-layer">
      <svg><use href="#bulb"/></svg><svg><use href="#sun"/></svg><svg><use href="#lock"/></svg><svg class="swatch"><use href="#swatch"/></svg>
      <select aria-label="Слой"><option>0</option></select>
    </div>
    <span class="edge"></span>
    <div class="combo combo-prop">
      <svg class="swatch"><use href="#swatch"/></svg>
      <select aria-label="Цвет"><option>По слою</option></select>
    </div>
    <span class="edge"></span>
    <div class="combo combo-prop">
      <span class="linetype"></span>
      <select aria-label="Тип линии"><option>По слою</option></select>
    </div>
    <span class="edge"></span>
    <div class="combo combo-weight"><span class="linetype"></span></div>
  </div>

  <main class="workspace">
    <div class="side side-left">
      <div class="side-group">
        <span class="grip-h"></span>
        <button class="tool" aria-label="Отрезок"><svg><use href="#line"/></svg></button>
        <button class="tool more" aria-label="Прямая"><svg><use href="#xline"/></svg></button>
        <button class="tool" aria-label="Полилиния"><svg><use href="#pline"/></svg></button>
        <button class="tool" aria-label="Многоугольник"><svg><use href="#polygon"/></svg></button>
        <button class="tool more" aria-label="Прямоугольник"><svg><use href="#rect"/></svg></button>
        <button class="tool more" aria-label="Дуга"><svg><use href="#arc"/></svg></button>
        <button class="tool more" aria-label="Окружность"><svg><use href="#circle"/></svg></button>
        <span class="sep-h"></span>
        <button class="tool" aria-label="Облако"><svg><use href="#cloud"/></svg></button>
        <button class="tool" aria-label="Сплайн"><svg><use href="#spline"/></svg></button>
        <button class="tool more" aria-label="Эллипс"><svg><use href="#ellipse"/></svg></button>
        <span class="sep-h"></span>
        <button class="tool more" aria-label="Штриховка"><svg><use href="#hatch"/></svg></button>
        <span class="sep-h"></span>
        <button class="tool more" aria-label="Вставка блока"><svg><use href="#insblock"/></svg></button>
        <button class="tool more" aria-label="Создание блока"><svg><use href="#mkblock"/></svg></button>
        <span class="sep-h"></span>
        <button class="tool more" aria-label="Точка"><svg><use href="#point"/></svg></button>
        <span class="sep-h"></span>
        <button class="tool" aria-label="Таблица"><svg><use href="#tables2"/></svg></button>
        <button class="tool more" aria-label="Текст"><svg><use href="#text"/></svg></button>
      </div>
    </div>

    <div class="center">
      <section class="document">
        <div class="doc-tabs">
          <div class="doc-tab">
            <span>Principal_new_moe.dwg</span>
            <button aria-label="Закрыть документ"><svg viewBox="0 0 9 9"><path d="M1 1L8 8M8 1L1 8" stroke="#333" stroke-width="1.200"/></svg></button>
          </div>
          <button class="doc-list" aria-label="Список документов"><svg viewBox="0 0 10 6"><path d="M0 0H10L5 5Z" fill="#454c58"/></svg></button>
        </div>

        <div class="frame">
          <div class="viewport">
            <div class="canvas">
              <svg class="sheet" viewBox="341 152 304 427" aria-label="Чертёж">
                <defs>
                  <pattern id="grid" x="356" y="167" width="14.700" height="14.700" patternUnits="userSpaceOnUse"><path d="M.5 0V14.700M0 .5H14.700" stroke="#dcdcdc"/></pattern>
                  <pattern id="fine" x="386" y="160" width="5" height="5" patternUnits="userSpaceOnUse"><path d="M.5 0V5" stroke="#ededed"/></pattern>
                  <!-- one side of the schematic, the other is mirrored -->
                  <g id="half">
                    <path d="M429 290.500H449.500M449.500 281.500V306.500H468.500V311.500M449.500 281.500H455.500M462.500 281.500H469.500M472.500 281.500H498.500V323.500H429M469.500 278.500V284.500M472.500 278.500V284.500"/>
                    <path d="M455.500 279.500H462.500V283.500H455.500ZM466.500 311.500H483.500V316.500H466.500ZM487.500 285.500H491.500V291.500H487.500Z"/>
                    <path d="M429 301.500H444.500V319.500H473.500V316.500M429 312.500H441.500V321.500H477.500V316.500M481.500 316.500V323.500"/>
                    <path d="M480.500 281.500V286.500M477 286.500H484M477 288.500H484M480.500 288.500V296.500H503.500V371.500H480.500M489.500 281.500V285.500M489.500 291.500V296.500"/>
                    <path d="M429 333.500H503.500M429 344.500H498.500V386.500H472.500M469.500 386.500H462.500M455.500 386.500H449.500V361.500H468.500V356.500M429 376.500H449.500M469.500 383.500V389.500M472.500 383.500V389.500"/>
                    <path d="M455.500 384.500H462.500V388.500H455.500ZM466.500 351.500H483.500V356.500H466.500ZM487.500 376.500H491.500V382.500H487.500Z"/>
                    <path d="M429 355.500H441.500V346.500H477.500V351.500M429 365.500H444.500V348.500H473.500V351.500M481.500 344.500V351.500"/>
                    <path d="M480.500 371.500V379.500M477 379.500H484M477 381.500H484M480.500 381.500V386.500M489.500 371.500V376.500M489.500 382.500V386.500"/>
                  </g>
                </defs>
                <path d="M341.500 152.500H643.500V578.500H341.500Z" fill="#fafafa"/>
                <path d="M386 160H586V480H386Z" fill="#f5f5f5"/>
                <path d="M386 160H586V480H386Z" fill="url(#fine)"/>
                <path d="M341.500 152.500H643.500V578.500H341.500Z" fill="url(#grid)" stroke="#787878"/>
                <g class="ink">
                  <path d="M348.500 159.500V572.500M636.500 159.500V572.500" stroke-dasharray="13 6"/>
                  <path d="M348.500 572.500H636.500" stroke-dasharray="16 6"/>
                  <path d="M348.500 159.500H364M368 159.500H644M368.500 159.500V335.500M375.500 159.500V335.500M368.500 352.500V565.500M375.500 352.500V565.500M385.500 159.500V565.500"/>
                  <path d="M644 159V566" stroke-width="2"/>
                  <path d="M368 247.500H385M368 335.500H385M368 352.500H385M368 404.500H385M368 440.500H385M368 477.500H385M368 528.500H385M368 565.500H644M385 179.500H488.500V159.500"/>
                  <path d="M385 484.500H644M385 492.500H484M385 499.500H484M385 506.500H644M385 514.500H484M385 521.500H484M385 528.500H484M385 536.500H484M385 543.500H644M385 551.500H484M385 558.500H484"/>
                  <path d="M398.500 484.500V521.500M414.500 484.500V565.500M445.500 484.500V565.500M465.500 484.500V565.500M484.500 484.500V565.500M570.500 506.500V565.500"/>
                  <path d="M570 514.500H644M570 536.500H644M592.500 506.500V536.500M617.500 506.500V536.500M578.500 514.500V536.500M585.500 514.500V536.500M600.500 536.500V543.500"/>
                  <path d="M400.500 286.500H429.500V380.500H400.500ZM422.500 286.500V380.500M400 296.500H429M400 307.500H429M400 317.500H429M400 328.500H429M400 339.500H429M400 349.500H429M400 360.500H429M400 370.500H429"/>
                  <path d="M598.500 286.500H627.500V380.500H598.500ZM606.500 286.500V380.500M598 296.500H627M598 307.500H627M598 317.500H627M598 328.500H627M598 339.500H627M598 349.500H627M598 360.500H627M598 370.500H627"/>
                  <use href="#half"/>
                  <use href="#half" transform="translate(1029) scale(-1 1)"/>
                  <path d="M515 351.500H516M511 398.500H513"/>
                </g>
                <g class="draft">
                  <path d="M387.500 473.500V542.500H436.500ZM380.500 535.500H394.500V549.500H380.500ZM387.500 494.500L393.500 501.500 399.500 495.500M393.500 501.500V506.500M409.500 530.500L422.500 542.500M420.500 531.500L409.500 541.500M387.500 535.500L394.500 542.500"/>
                </g>
                <g class="note">
                  <text x="413" y="282">X1</text><text x="610" y="282">X2</text>
                  <text x="524" y="496">МАИР.123456.002</text>
                  <text transform="translate(469 163) rotate(180)">МАИР.123456.002</text>
                  <text x="499" y="522">Функциональная</text>
                  <text x="516" y="534">ячейка</text>
                  <text x="573" y="528">1</text>
                </g>
                <g class="note note-mid">
                  <text x="589" y="553">МАИ каф. 404</text>
                  <text x="594" y="562">гр. 04-307</text>
                </g>
                <g class="note note-small">
                  <text x="406" y="293">A1 IN</text><text x="425" y="293">1</text>
                  <text x="407" y="304">GND</text><text x="425" y="304">2</text>
                  <text x="402" y="314">PWR +9V</text><text x="425" y="314">3</text>
                  <text x="404" y="325">A1 OUT</text><text x="425" y="325">4</text>
                  <text x="407" y="336">GND</text><text x="425" y="336">5</text>
                  <text x="404" y="346">A2 OUT</text><text x="425" y="346">6</text>
                  <text x="402" y="357">PWR +9V</text><text x="425" y="357">7</text>
                  <text x="407" y="367">GND</text><text x="425" y="367">8</text>
                  <text x="406" y="377">A2 IN</text><text x="425" y="377">9</text>
                  <text x="601" y="293">1</text><text x="611" y="293">A3 IN</text>
                  <text x="601" y="304">2</text><text x="612" y="304">GND</text>
                  <text x="601" y="314">3</text><text x="608" y="314">PWR +9V</text>
                  <text x="601" y="325">4</text><text x="609" y="325">A3 OUT</text>
                  <text x="601" y="336">5</text><text x="612" y="336">GND</text>
                  <text x="601" y="346">6</text><text x="609" y="346">A4 OUT</text>
                  <text x="601" y="357">7</text><text x="608" y="357">PWR +9V</text>
                  <text x="601" y="367">8</text><text x="612" y="367">GND</text>
                  <text x="601" y="377">9</text><text x="611" y="377">A4 IN</text>
                  <text x="387" y="520">Изм.</text><text x="400" y="520">Лист</text><text x="416" y="520">N докум.</text><text x="447" y="520">Подп.</text><text x="468" y="520">Дата</text>
                  <text x="387" y="527">Разраб.</text><text x="421" y="527">Иванов</text>
                  <text x="387" y="535">Пров.</text><text x="418" y="535">Филиппова</text>
                  <text x="389" y="542">Т.контр.</text>
                  <text x="387" y="557">Н.контр.</text>
                  <text x="387" y="564">Утв.</text><text x="418" y="564">Филиппова</text>
                  <text x="579" y="512">Лит.</text><text x="598" y="512">Масса</text><text x="619" y="512">Масштаб</text>
                  <text x="574" y="542">Лист</text><text x="603" y="542">Листов</text>
                  <text x="573" y="571">Формат А4</text>
                  <text transform="translate(374 222) rotate(-90)">Перв. примен.</text>
                  <text transform="translate(374 301) rotate(-90)">Справ.</text>
                  <text transform="translate(374 397) rotate(-90)">Подп. и дата</text>
                  <text transform="translate(374 437) rotate(-90)">Инв. дубл.</text>
                  <text transform="translate(374 471) rotate(-90)">Взам. инв.</text>
                  <text transform="translate(374 521) rotate(-90)">Подп. и дата</text>
                  <text transform="translate(374 563) rotate(-90)">Инв. подл.</text>
                </g>
                <g class="note note-tiny">
                  <text x="453" y="277">10к</text><text x="468" y="277">100</text><text x="491" y="284">20к</text><text x="471" y="292">4н7</text><text x="471" y="316">DA1</text>
                  <text x="471" y="356">DA2</text><text x="454" y="382">10к</text><text x="467" y="382">100</text><text x="473" y="376">4н7</text><text x="491" y="376">20к</text>
                  <text x="551" y="277">100</text><text x="566" y="277">10к</text><text x="531" y="285">20к</text><text x="550" y="292">4н7</text><text x="549" y="316">DA3</text>
                  <text x="549" y="356">DA4</text><text x="552" y="382">100</text><text x="568" y="382">10к</text><text x="549" y="376">4н7</text><text x="531" y="376">20к</text>
                </g>
              </svg>
            </div>
            <div class="scroll-v">
              <button class="scroll-btn" aria-label="Вверх"><svg><use href="#up"/></svg></button>
              <div class="track-v"><span class="thumb-v"><i></i></span></div>
              <button class="scroll-btn" aria-label="Вниз"><svg><use href="#down"/></svg></button>
            </div>
          </div>

          <div class="sheet-bar">
            <div class="sheet-nav">
              <button class="scroll-btn" aria-label="Предыдущий лист"><svg><use href="#left"/></svg></button>
              <button class="scroll-btn" aria-label="Следующий лист"><svg><use href="#right"/></svg></button>
            </div>
            <div class="sheet-tabs">
              <button class="sheet-tab">Модель</button>
              <button class="sheet-tab active">A4-V</button>
              <button class="sheet-tab">A4-V (2)</button>
            </div>
            <button class="view-btn" aria-label="Виды"><svg><use href="#views"/></svg></button>
            <div class="scroll-h">
              <button class="scroll-btn" aria-label="Влево"><svg><use href="#left"/></svg></button>
              <span class="thumb-h"><i></i></span>
              <button class="scroll-btn" aria-label="Вправо"><svg><use href="#right"/></svg></button>
            </div>
            <svg class="resize" viewBox="0 0 12 12" aria-hidden="true"><path d="M1 12L12 1M5 12L12 5M9 12L12 9" stroke="#8c8c8c" stroke-width="1.300"/></svg>
          </div>
        </div>
      </section>

      <section class="command">
        <div class="command-side">
          <button aria-label="Закрыть панель"><svg viewBox="0 0 9 9"><path d="M1 1L8 8M8 1L1 8" stroke="#444" stroke-width="1.300"/></svg></button>
          <button aria-label="Закрепить"><svg viewBox="0 0 9 9"><path d="M1 6.500H8M4.500 7V9M2.500 6V1.500H6.500V6" fill="none" stroke="#555"/></svg></button>
          <label class="command-label" for="cmd">Команда</label>
        </div>
        <div class="command-body">
          <div class="log-row">
            <div class="log">
              <p>OPEN,ИМПОРТА,ОТКРЫТЬ,УРЛОТКРОЙ - Открыть...</p>
              <p>startscr - Экран приветствия</p>
              <p>Шрифт gostw.shx заменён на CS_Gost2304.shx</p>
              <p>Шрифт gostw.shx заменён на CS_Gost2304.shx</p>
            </div>
            <div class="scroll-v">
              <button class="scroll-btn" aria-label="Журнал вверх"><svg><use href="#up"/></svg></button>
              <div class="track-v track-log"><span class="thumb-v"></span></div>
              <button class="scroll-btn" aria-label="Журнал вниз"><svg><use href="#down"/></svg></button>
            </div>
          </div>
          <input class="command-input" id="cmd" type="text" value="Команда:">
        </div>
      </section>
    </div>

    <div class="side side-right">
      <div class="side-group">
        <span class="grip-h"></span>
        <button class="tool" aria-label="Стереть"><svg><use href="#erase"/></svg></button>
        <button class="tool" aria-label="Зеркало"><svg><use href="#mirror"/></svg></button>
        <button class="tool" aria-label="Подобие"><svg><use href="#offset"/></svg></button>
        <button class="tool" aria-label="Контур"><svg><use href="#contour"/></svg></button>
        <button class="tool" aria-label="Массив"><svg><use href="#array"/></svg></button>
        <span class="sep-h"></span>
        <button class="tool" aria-label="Перенос"><svg><use href="#move"/></svg></button>
        <button class="tool" aria-label="Поворот"><svg><use href="#rotate"/></svg></button>
        <span class="sep-h"></span>
        <button class="tool" aria-label="Масштаб"><svg><use href="#scale"/></svg></button>
        <button class="tool" aria-label="Растянуть"><svg><use href="#stretch"/></svg></button>
        <span class="sep-h"></span>
        <button class="tool" aria-label="Обрезка"><svg><use href="#trim"/></svg></button>
        <button class="tool" aria-label="Удлинить"><svg><use href="#extend"/></svg></button>
        <button class="tool" aria-label="Разорвать"><svg><use href="#break2"/></svg></button>
        <button class="tool" aria-label="Разорвать в точке"><svg><use href="#break1"/></svg></button>
        <button class="tool" aria-label="Выровнять"><svg><use href="#align"/></svg></button>
        <span class="sep-h"></span>
        <button class="tool" aria-label="Фаска"><svg><use href="#chamfer"/></svg></button>
        <button class="tool" aria-label="Сопряжение"><svg><use href="#fillet"/></svg></button>
        <span class="sep-h"></span>
        <button class="tool" aria-label="Разбивка"><svg><use href="#bomb"/></svg></button>
        <button class="tool" aria-label="Взорвать"><svg><use href="#explode"/></svg></button>
      </div>
      <div class="side-group">
        <span class="grip-h"></span>
        <button class="tool" aria-label="На передний план"><svg><use href="#order1"/></svg></button>
        <button class="tool" aria-label="На задний план"><svg><use href="#order2"/></svg></button>
        <button class="tool" aria-label="Поместить перед"><svg><use href="#order3"/></svg></button>
        <button class="tool" aria-label="Поместить за"><svg><use href="#order4"/></svg></button>
      </div>
    </div>
  </main>

  <footer class="statusbar">
    <span class="coords">103.8313,-17.6838,0</span>
    <div class="modes">
      <button class="mode">ШАГ</button>
      <button class="mode on">СЕТКА</button>
      <button class="mode on">оПРИВЯЗКА</button>
      <button class="mode on">ОТС-ОБЪЕКТ</button>
      <button class="mode on">ОТС-ПОЛЯР</button>
      <button class="mode">ОРТО</button>
      <button class="mode on">ВЕС</button>
      <button class="mode on">ШТРИХОВКА</button>
    </div>
    <div class="status-tools">
      <button class="status-btn" aria-label="Лист"><svg><use href="#paper"/></svg></button>
      <button class="status-btn" aria-label="Сетка"><svg><use href="#gridico"/></svg></button>
      <button class="status-btn status-scale">m1:1</button>
      <button class="status-btn" aria-label="Панорама"><svg><use href="#hand"/></svg></button>
      <button class="status-btn" aria-label="Лупа"><svg><use href="#zoom"/></svg></button>
      <button class="status-btn" aria-label="Весь чертёж"><svg><use href="#zoomall"/></svg></button>
      <button class="status-btn" aria-label="К объекту"><svg><use href="#zoomobj"/></svg></button>
      <button class="status-btn" aria-label="Обновить"><svg><use href="#refresh"/></svg></button>
      <button class="status-btn" aria-label="Полный экран"><svg><use href="#full"/></svg></button>
    </div>
  </footer>

</body>
</html>
```
FILE: styles.css
```css
* { box-sizing: border-box; }
body {
  margin: 0; height: 100vh; overflow: hidden;
  display: flex; flex-direction: column;
  background: #535353; color: #000;
  font-family: "Open Sans", "Noto Sans", sans-serif; font-size: 11px;
}
button { padding: 0; border: none; background: none; font: inherit; color: inherit; }
svg { display: block; flex: none; }
.sprite { position: absolute; width: 0; height: 0; }

/* title and menu */
.titlebar {
  flex: none; height: 26px; padding: 0 6px 0 1px;
  display: flex; align-items: center;
  background: linear-gradient(#40454f, #2d2e30 30%, #333 60%, #3e3e3e);
}
.app-logo { width: 16px; height: 18px; }
.app-title {
  flex: 1; margin: 0; padding-right: 7px; text-align: center;
  color: #a9c8ee; font-size: 12px; font-weight: normal;
}
.win-buttons { display: flex; gap: 13px; }
.win-buttons svg { width: 10px; height: 10px; }
.menubar { flex: none; height: 25px; display: flex; align-items: center; gap: 15px; }
.menubar a { color: #fff; text-decoration: none; }
.menubar .grip { margin-right: -9px; }

/* toolbars */
.toolbar {
  flex: none; height: 23px;
  display: flex; align-items: center;
  background: linear-gradient(#cdd0d4, #b4b8be 50%, #979da7);
  border-radius: 3px;
}
.toolbar + .toolbar { margin-top: 1px; }
.grip {
  flex: none; width: 10px; height: 15px;
  background: radial-gradient(circle, #2c3036 1px, transparent 1px) 1px 0 / 8px 4px repeat-y;
}
.grip-light { background-image: radial-gradient(circle, #eee 1px, transparent 1px); }
.tool {
  position: relative; flex: none; width: 21px; height: 21px;
  display: flex; align-items: center; justify-content: center;
}
.tool svg { width: 16px; height: 16px; }
.tool-wide { width: 25px; }
.tool-last { width: 30px; }
.more::after {
  content: ""; position: absolute; right: 0; bottom: 0;
  border: 2px solid transparent; border-right-color: #2f4e94; border-bottom-color: #2f4e94;
}
.sep { flex: none; width: 1px; height: 21px; margin: 0 3px 0 4px; background: #f2f3f5; }
.edge {
  flex: none; width: 5px; height: 21px;
  border-left: 1px solid #fff; border-right: 1px solid #e6e8ea; background: #a2a7ae;
}
.combo {
  flex: none; height: 20px; padding-left: 3px;
  display: flex; align-items: center; gap: 1px;
  background: #fff; border-top: 1px solid #000; border-left: 1px solid #000;
}
.combo select {
  flex: 1; min-width: 0; height: 18px; padding: 0;
  appearance: none; border: none; background: transparent; color: #000;
  font-family: "Liberation Sans", sans-serif; font-size: 11px;
}
.combo svg { width: 16px; height: 16px; }
.combo .swatch { width: 12px; height: 12px; margin-right: 1px; }
.combo-textstyle { flex: 203 1 0; }
.combo-dimstyle { flex: 184 1 0; }
.combo-layer { flex: 1; }
.combo-prop { width: 146px; }
.combo-weight { width: 19px; overflow: hidden; }
.linetype { flex: none; width: 56px; height: 1px; margin: 0 2px 0 1px; background: #000; }

/* side toolbars */
.workspace { flex: 1; min-height: 0; display: flex; }
.side { flex: none; width: 25px; overflow: hidden; }
.side-right { width: 24px; padding-left: 1px; }
.side-group {
  width: 23px; padding-bottom: 8px;
  display: flex; flex-direction: column; align-items: center;
  background: linear-gradient(90deg, #c6c9ce, #afb3ba 50%, #8d939d);
  border-radius: 3px;
}
.side-right .side-group { padding-bottom: 1px; }
.grip-h {
  width: 15px; height: 10px;
  background: radial-gradient(circle, #2c3036 1px, transparent 1px) 0 2px / 4px 8px repeat-x;
}
.sep-h { width: 21px; height: 1px; margin: 4px 0 3px; background: #f2f3f5; }

/* document window */
.center { flex: 1; min-width: 0; display: flex; flex-direction: column; gap: 4px; }
.document { flex: 1; min-height: 0; display: flex; flex-direction: column; }
.doc-tabs {
  flex: none; height: 21px; padding: 3px 6px 0 3px;
  display: flex; justify-content: space-between; align-items: center;
  background: linear-gradient(#8d929b, #a9aeb6 40%, #cfd2d6);
}
.doc-tab {
  height: 18px; padding: 0 5px 0 21px;
  display: flex; align-items: center; gap: 5px;
  background: #fff; font-weight: bold;
  clip-path: polygon(0 100%, 14px 2px, 18px 0, 100% 0, 100% 100%);
}
.doc-tab svg { width: 9px; height: 9px; }
.doc-list svg { width: 10px; height: 6px; }
.frame {
  flex: 1; min-height: 0; display: flex; flex-direction: column;
  border: solid #fff; border-width: 1px 2px 2px; background: #f0f0f0;
}
.viewport {
  flex: 1; min-height: 0; display: flex;
  padding-right: 3px; border: solid #858585; border-width: 2px 0 1px 2px;
}
.canvas {
  flex: 1; min-width: 0; padding-right: 21px;
  display: flex; align-items: center; justify-content: center;
  background: #e9ebe8;
}
.sheet { width: 304px; height: 427px; }
.ink { fill: none; stroke: #111; }
.draft { fill: none; stroke: #1414a0; }
.note {
  font-family: "Liberation Sans", sans-serif; font-style: italic; font-size: 8px;
  fill: #000; stroke: #000; stroke-width: .3px;
}
.note-mid { font-size: 6px; }
.note-small { font-size: 5px; }
.note-tiny { font-size: 4px; }

/* scroll bars */
.scroll-v { flex: none; width: 17px; display: flex; flex-direction: column; background: #f4f8ff; }
.scroll-btn {
  flex: none; width: 17px; height: 17px;
  display: flex; align-items: center; justify-content: center;
  border: 1px solid #8ea3c4; border-radius: 2px;
  background: linear-gradient(#eef4fd, #b9cfef);
}
.scroll-btn svg { width: 9px; height: 9px; }
.track-v {
  flex: 1; display: flex; flex-direction: column;
  padding: 94px 1px; background: linear-gradient(90deg, #e6effb, #fbfdff);
}
.thumb-v {
  flex: 1; display: flex; align-items: center; justify-content: center;
  border: 1px solid #7f96bc; border-radius: 2px;
  background: linear-gradient(90deg, #f2f7fe, #cfe0f8 50%, #a9c4ea);
}
.thumb-v i { width: 6px; height: 8px; background: repeating-linear-gradient(#7f96bc 0 1px, transparent 1px 2px); }
.track-log { padding: 8px 0 1px; }
.scroll-h { flex: 1; min-width: 0; display: flex; gap: 1px; }
.thumb-h {
  flex: 1; display: flex; align-items: center; justify-content: center;
  border: 1px solid #8ea3c4; border-radius: 2px;
  background: linear-gradient(#f2f7fe, #cfe0f8 50%, #b3cbee);
}
.thumb-h i { width: 8px; height: 6px; background: repeating-linear-gradient(90deg, #7f96bc 0 1px, transparent 1px 2px); }

/* sheet tabs */
.sheet-bar {
  flex: none; height: 21px; padding-left: 4px;
  display: flex; align-items: center; background: #ececee;
}
.sheet-nav { display: flex; gap: 2px; }
.sheet-tabs { flex: none; width: 402px; height: 17px; display: flex; align-self: flex-start; }
.sheet-tab {
  --fill: #ececee;
  height: 17px; padding: 0 10px 1px; margin-right: -5px;
  font-family: "Liberation Sans", sans-serif;
  background:
    linear-gradient(to top right, transparent 45%, #777 45% 55%, var(--fill) 55%) left / 8px 100% no-repeat,
    linear-gradient(to bottom right, var(--fill) 45%, #777 45% 55%, transparent 55%) right / 8px 100% no-repeat,
    linear-gradient(var(--fill) 16px, #777 16px) center / calc(100% - 16px) 100% no-repeat;
}
.sheet-tab.active { --fill: #fff; position: relative; font-weight: bold; }
.view-btn { flex: none; width: 20px; height: 18px; margin-right: 3px; border: 1px solid #000; background: #fff; }
.view-btn svg { width: 18px; height: 16px; }
.resize { width: 12px; height: 12px; margin: 6px 3px 0 9px; }

/* command line */
.command {
  flex: none; height: 70px; display: flex;
  border-top: 1px solid #ddd; border-left: 1px solid #ddd; border-right: 1px solid #fff;
}
.command-side {
  flex: none; width: 17px; padding-top: 5px; overflow: hidden;
  display: flex; flex-direction: column; align-items: center; gap: 10px;
  background: #a0a0a0; color: #555;
}
.command-side svg { width: 9px; height: 9px; }
.command-label { height: 32px; overflow: hidden; writing-mode: vertical-rl; transform: rotate(180deg); }
.command-body { flex: 1; min-width: 0; display: flex; flex-direction: column; border-top: 1px solid #808080; }
.log-row { flex: 1; min-height: 0; padding-bottom: 1px; display: flex; background: #f0f0f0; }
.log {
  flex: 1; min-width: 0; padding-left: 2px; overflow: hidden;
  display: flex; flex-direction: column; justify-content: flex-end;
}
.log p { flex: none; margin: 0; line-height: 14px; white-space: nowrap; }
.log, .command-input { font-family: "Liberation Mono", monospace; font-size: 12px; }
.command-input {
  flex: none; width: 100%; height: 16px; padding: 0 2px;
  border: none; border-top: 1px solid #808080; background: #fff; color: #000; outline: none;
}

/* status bar */
.statusbar {
  flex: none; height: 24px; display: flex; align-items: center;
  background: linear-gradient(#444752, #34353a 30%, #2a2a2a);
}
.coords { flex: none; width: 215px; padding-left: 2px; color: #fff; }
.modes { display: flex; }
.mode {
  height: 20px; padding: 0 3px;
  border: 1px solid #8c8c94; border-left-color: #fff; border-radius: 2px;
  background: linear-gradient(#fff, #e6ebf6);
}
.mode.on {
  border-color: #b98a44; border-left-color: #ffe2ae;
  background: linear-gradient(#fbd9a4, #fcc468 60%, #ffe08c);
}
.status-tools {
  margin-left: auto; height: 22px; padding-left: 6px;
  display: flex; align-items: center; gap: 1px;
  background: #a8acb4; border-left: 1px solid #000;
}
.status-btn {
  width: 21px; height: 20px;
  display: flex; align-items: center; justify-content: center;
  border: 1px solid #74787e; background: linear-gradient(#fff, #dfe1e5);
}
.status-btn svg { width: 16px; height: 16px; }
.status-scale { width: 89px; }
```
